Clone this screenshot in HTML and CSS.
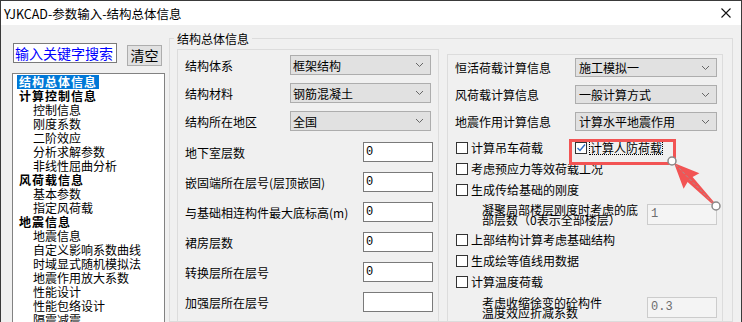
FILE: index.html
```html
<!DOCTYPE html>
<html>
  <head>
    <meta charset="utf-8">
    <link rel="stylesheet" href="styles.css">
  </head>
  <body>
    <div class="window">
      <div class="titlebar">
        <span class="title">YJKCAD-参数输入-结构总体信息</span>
        <svg class="close" width="10" height="10" viewBox="0 0 10 10">
          <path d="M0.5 0.5 L9.5 9.5 M9.5 0.5 L0.5 9.5" stroke="#111" stroke-width="1.1" fill="none"/>
        </svg>
      </div>
      <div class="content">
        <div class="sidebar">
          <div class="search-row">
            <div class="search-box">输入关键字搜索</div>
            <button class="btn-clear">清空</button>
          </div>
          <div class="tree">
            <div class="tree-item group selected"><span>结构总体信息</span></div>
            <div class="tree-item group"><span>计算控制信息</span></div>
            <div class="tree-item child">控制信息</div>
            <div class="tree-item child">刚度系数</div>
            <div class="tree-item child">二阶效应</div>
            <div class="tree-item child">分析求解参数</div>
            <div class="tree-item child">非线性屈曲分析</div>
            <div class="tree-item group"><span>风荷载信息</span></div>
            <div class="tree-item child">基本参数</div>
            <div class="tree-item child">指定风荷载</div>
            <div class="tree-item group"><span>地震信息</span></div>
            <div class="tree-item child">地震信息</div>
            <div class="tree-item child">自定义影响系数曲线</div>
            <div class="tree-item child">时域显式随机模拟法</div>
            <div class="tree-item child">地震作用放大系数</div>
            <div class="tree-item child">性能设计</div>
            <div class="tree-item child">性能包络设计</div>
            <div class="tree-item child">隔震减震</div>
          </div>
        </div>

        <fieldset class="groupbox">
          <legend>结构总体信息</legend>
          <div class="panels">
            <!-- left column -->
            <div class="panel panel-left">
              <div class="combos">
                <div class="row">
                  <span class="label">结构体系</span>
                  <div class="combo"><span>框架结构</span><svg width="7" height="4"><polyline points="0,0 3.5,3.5 7,0" stroke="#666" fill="none"/></svg></div>
                </div>
                <div class="row">
                  <span class="label">结构材料</span>
                  <div class="combo"><span>钢筋混凝土</span><svg width="7" height="4"><polyline points="0,0 3.5,3.5 7,0" stroke="#666" fill="none"/></svg></div>
                </div>
                <div class="row">
                  <span class="label">结构所在地区</span>
                  <div class="combo"><span>全国</span><svg width="7" height="4"><polyline points="0,0 3.5,3.5 7,0" stroke="#666" fill="none"/></svg></div>
                </div>
              </div>
              <div class="inputs">
                <div class="row"><span>地下室层数</span><div class="textbox">0</div></div>
                <div class="row"><span>嵌固端所在层号(层顶嵌固)</span><div class="textbox">0</div></div>
                <div class="row"><span>与基础相连构件最大底标高(m)</span><div class="textbox">0</div></div>
                <div class="row"><span>裙房层数</span><div class="textbox">0</div></div>
                <div class="row"><span>转换层所在层号</span><div class="textbox">0</div></div>
                <div class="row"><span>加强层所在层号</span><div class="textbox"></div></div>
              </div>
            </div>

            <!-- right column -->
            <div class="panel panel-right">
              <div class="combos">
                <div class="row">
                  <span class="label">恒活荷载计算信息</span>
                  <div class="combo"><span>施工模拟一</span><svg width="7" height="4"><polyline points="0,0 3.5,3.5 7,0" stroke="#666" fill="none"/></svg></div>
                </div>
                <div class="row">
                  <span class="label">风荷载计算信息</span>
                  <div class="combo"><span>一般计算方式</span><svg width="7" height="4"><polyline points="0,0 3.5,3.5 7,0" stroke="#666" fill="none"/></svg></div>
                </div>
                <div class="row">
                  <span class="label">地震作用计算信息</span>
                  <div class="combo"><span>计算水平地震作用</span><svg width="7" height="4"><polyline points="0,0 3.5,3.5 7,0" stroke="#666" fill="none"/></svg></div>
                </div>
              </div>
              <div class="checks">
                <div class="check-row">
                  <label class="check first"><span class="box"></span>计算吊车荷载</label>
                  <label class="check marked">
                    <span class="box">
                      <svg width="10" height="10" viewBox="0 0 10 10"><polyline points="1.5,5 4,7.5 9,1.5" stroke="#2b6cc4" stroke-width="1.4" fill="none"/></svg>
                    </span><span class="focus">计算人防荷载</span>
                  </label>
                </div>
                <div class="check-row"><label class="check"><span class="box"></span>考虑预应力等效荷载工况</label></div>
                <div class="check-row"><label class="check"><span class="box"></span>生成传给基础的刚度</label></div>
                <div class="multi-row">
                  <span class="multi-label">凝聚局部楼层刚度时考虑的底<br>部层数（0表示全部楼层）</span>
                  <div class="textbox disabled">1</div>
                </div>
                <div class="check-row spaced"><label class="check"><span class="box"></span>上部结构计算考虑基础结构</label></div>
                <div class="check-row"><label class="check"><span class="box"></span>生成绘等值线用数据</label></div>
                <div class="check-row"><label class="check"><span class="box"></span>计算温度荷载</label></div>
                <div class="multi-row last">
                  <span class="multi-label">考虑收缩徐变的砼构件<br>温度效应折减系数</span>
                  <div class="textbox disabled">0.3</div>
                </div>
              </div>
            </div>
          </div>
        </fieldset>
      </div>

      <svg class="annotation" width="742" height="322" viewBox="0 0 742 322">
        <polygon points="674,163 699.4,173.3 692.6,177.1 716.7,205.3 715.3,206.7 687.6,182 683.6,188.7" fill="#f25454"/>
        <line x1="672" y1="161" x2="716" y2="206" stroke="#9a9a9a" stroke-width="1" stroke-dasharray="3,2"/>
        <circle cx="672" cy="161" r="4" fill="#fff" stroke="#8a8a8a" stroke-width="1.5"/>
        <circle cx="716" cy="206" r="4" fill="#fff" stroke="#8a8a8a" stroke-width="1.5"/>
      </svg>
    </div>
  </body>
</html>
```

FILE: styles.css
```css
* {
  box-sizing: border-box;
}
body {
  margin: 0;
  font-family: "Noto Sans CJK SC", "Microsoft YaHei", sans-serif;
  font-size: 12px;
  color: #000;
}
.window {
  position: relative;
  width: 742px;
  height: 322px;
  overflow: hidden;
  border: 1px solid #3a3a3a;
  border-bottom: none;
  background: #f0f0f0;
}
.titlebar {
  height: 24px;
  background: #fff;
  display: flex;
  align-items: center;
  justify-content: space-between;
  padding: 0 10px 0 3px;
}
.title {
  font-size: 12.5px;
}
.content {
  display: flex;
  height: 297px;
}

/* sidebar */
.sidebar {
  width: 164px;
  flex: none;
  padding-left: 11px;
}
.search-row {
  display: flex;
  align-items: flex-start;
  padding-top: 18px;
}
.search-box {
  margin-left: 1px;
  width: 104px;
  height: 20px;
  border: 1px solid #7a7a7a;
  background: #fff;
  color: #0000ff;
  font-size: 14px;
  line-height: 18px;
  padding-left: 1px;
  white-space: nowrap;
  overflow: hidden;
}
.btn-clear {
  margin: 2px 0 0 10px;
  width: 35px;
  height: 21px;
  padding: 0;
  border: 1px solid #adadad;
  background: #e1e1e1;
  font-family: "Noto Sans CJK SC", sans-serif;
  font-size: 14px;
  line-height: 19px;
  color: #000;
}
.tree {
  margin-top: 7px;
  width: 153px;
  height: 260px;
  border: 1px solid #828282;
  background: #fff;
  padding: 1px 0 0 4px;
}
.tree-item {
  height: 14px;
  line-height: 14px;
  white-space: nowrap;
}
.tree-item.group span {
  display: inline-block;
  padding: 0 2px;
  font-weight: bold;
  letter-spacing: 1px;
}
.tree-item.selected span {
  background: #0078d7;
  color: #fff;
}
.tree-item.child {
  padding-left: 16px;
}

/* group box */
.groupbox {
  flex: 1;
  min-width: 0;
  margin: 6px 8px 0 4px;
  border: 1px solid #dcdcdc;
  padding: 0 9px 0 7px;
}
.groupbox legend {
  padding: 0 3px;
  margin-left: -3px;
  line-height: 15px;
}
.panels {
  display: flex;
  align-items: flex-start;
  gap: 8px;
}
.panel {
  border: 1px solid #dcdcdc;
  border-bottom: none;
  height: 300px;
}
.panel-left {
  width: 262px;
  margin-top: 3px;
  padding: 5px 5px 0 7px;
}
.panel-right {
  width: 276px;
  margin-top: 8px;
  padding: 3px 5px 0 7px;
}
.combos {
  display: flex;
  flex-direction: column;
  gap: 8px;
}
.row {
  display: flex;
  align-items: center;
  height: 20px;
  white-space: nowrap;
}
.panel-right .row {
  height: 19px;
}
.label {
  width: 105px;
  flex: none;
}
.panel-right .label {
  width: 120px;
}
.combo {
  width: 141px;
  height: 20px;
  border: 1px solid #adadad;
  background: #e1e1e1;
  display: flex;
  align-items: center;
  justify-content: space-between;
  padding: 0 7px 0 2px;
}
.panel-right .combo {
  width: 142px;
  height: 19px;
  padding-left: 3px;
}
.inputs {
  display: flex;
  flex-direction: column;
  gap: 10px;
  margin-top: 11px;
}
.textbox {
  margin-left: auto;
  width: 70px;
  height: 20px;
  border: 1px solid #7a7a7a;
  background: #fff;
  padding-left: 2px;
  font-family: "Liberation Mono", monospace;
  font-size: 12px;
  line-height: 18px;
}
.textbox.disabled {
  height: 21px;
  border-color: #cccccc;
  background: #f4f4f4;
  color: #6d6d6d;
  line-height: 19px;
  padding-left: 3px;
}

/* check boxes */
.checks {
  margin-top: 6px;
}
.check-row {
  display: flex;
  align-items: center;
  height: 21px;
  padding-left: 1px;
  white-space: nowrap;
}
.check-row.spaced {
  margin-top: 4px;
}
.check {
  display: inline-flex;
  align-items: center;
}
.check.first {
  width: 119px;
}
.box {
  width: 12px;
  height: 12px;
  border: 1px solid #333;
  background: #fff;
  margin-right: 3px;
  display: flex;
  align-items: center;
  justify-content: center;
}
.check.marked {
  position: relative;
}
.check.marked::after {
  content: "";
  position: absolute;
  left: -6px;
  top: -2px;
  width: 101px;
  height: 20px;
  border: 3px solid #f25454;
}
.focus {
  outline: 1px dotted #000;
  line-height: 13px;
}
.multi-row {
  display: flex;
  align-items: center;
  height: 21px;
  margin-top: 4px;
  white-space: nowrap;
}
.multi-row.last {
  margin-top: 5px;
}
.multi-label {
  margin-left: 27px;
  line-height: 10px;
}

/* annotation overlay */
.annotation {
  position: absolute;
  left: -1px;
  top: -1px;
  pointer-events: none;
}
```
